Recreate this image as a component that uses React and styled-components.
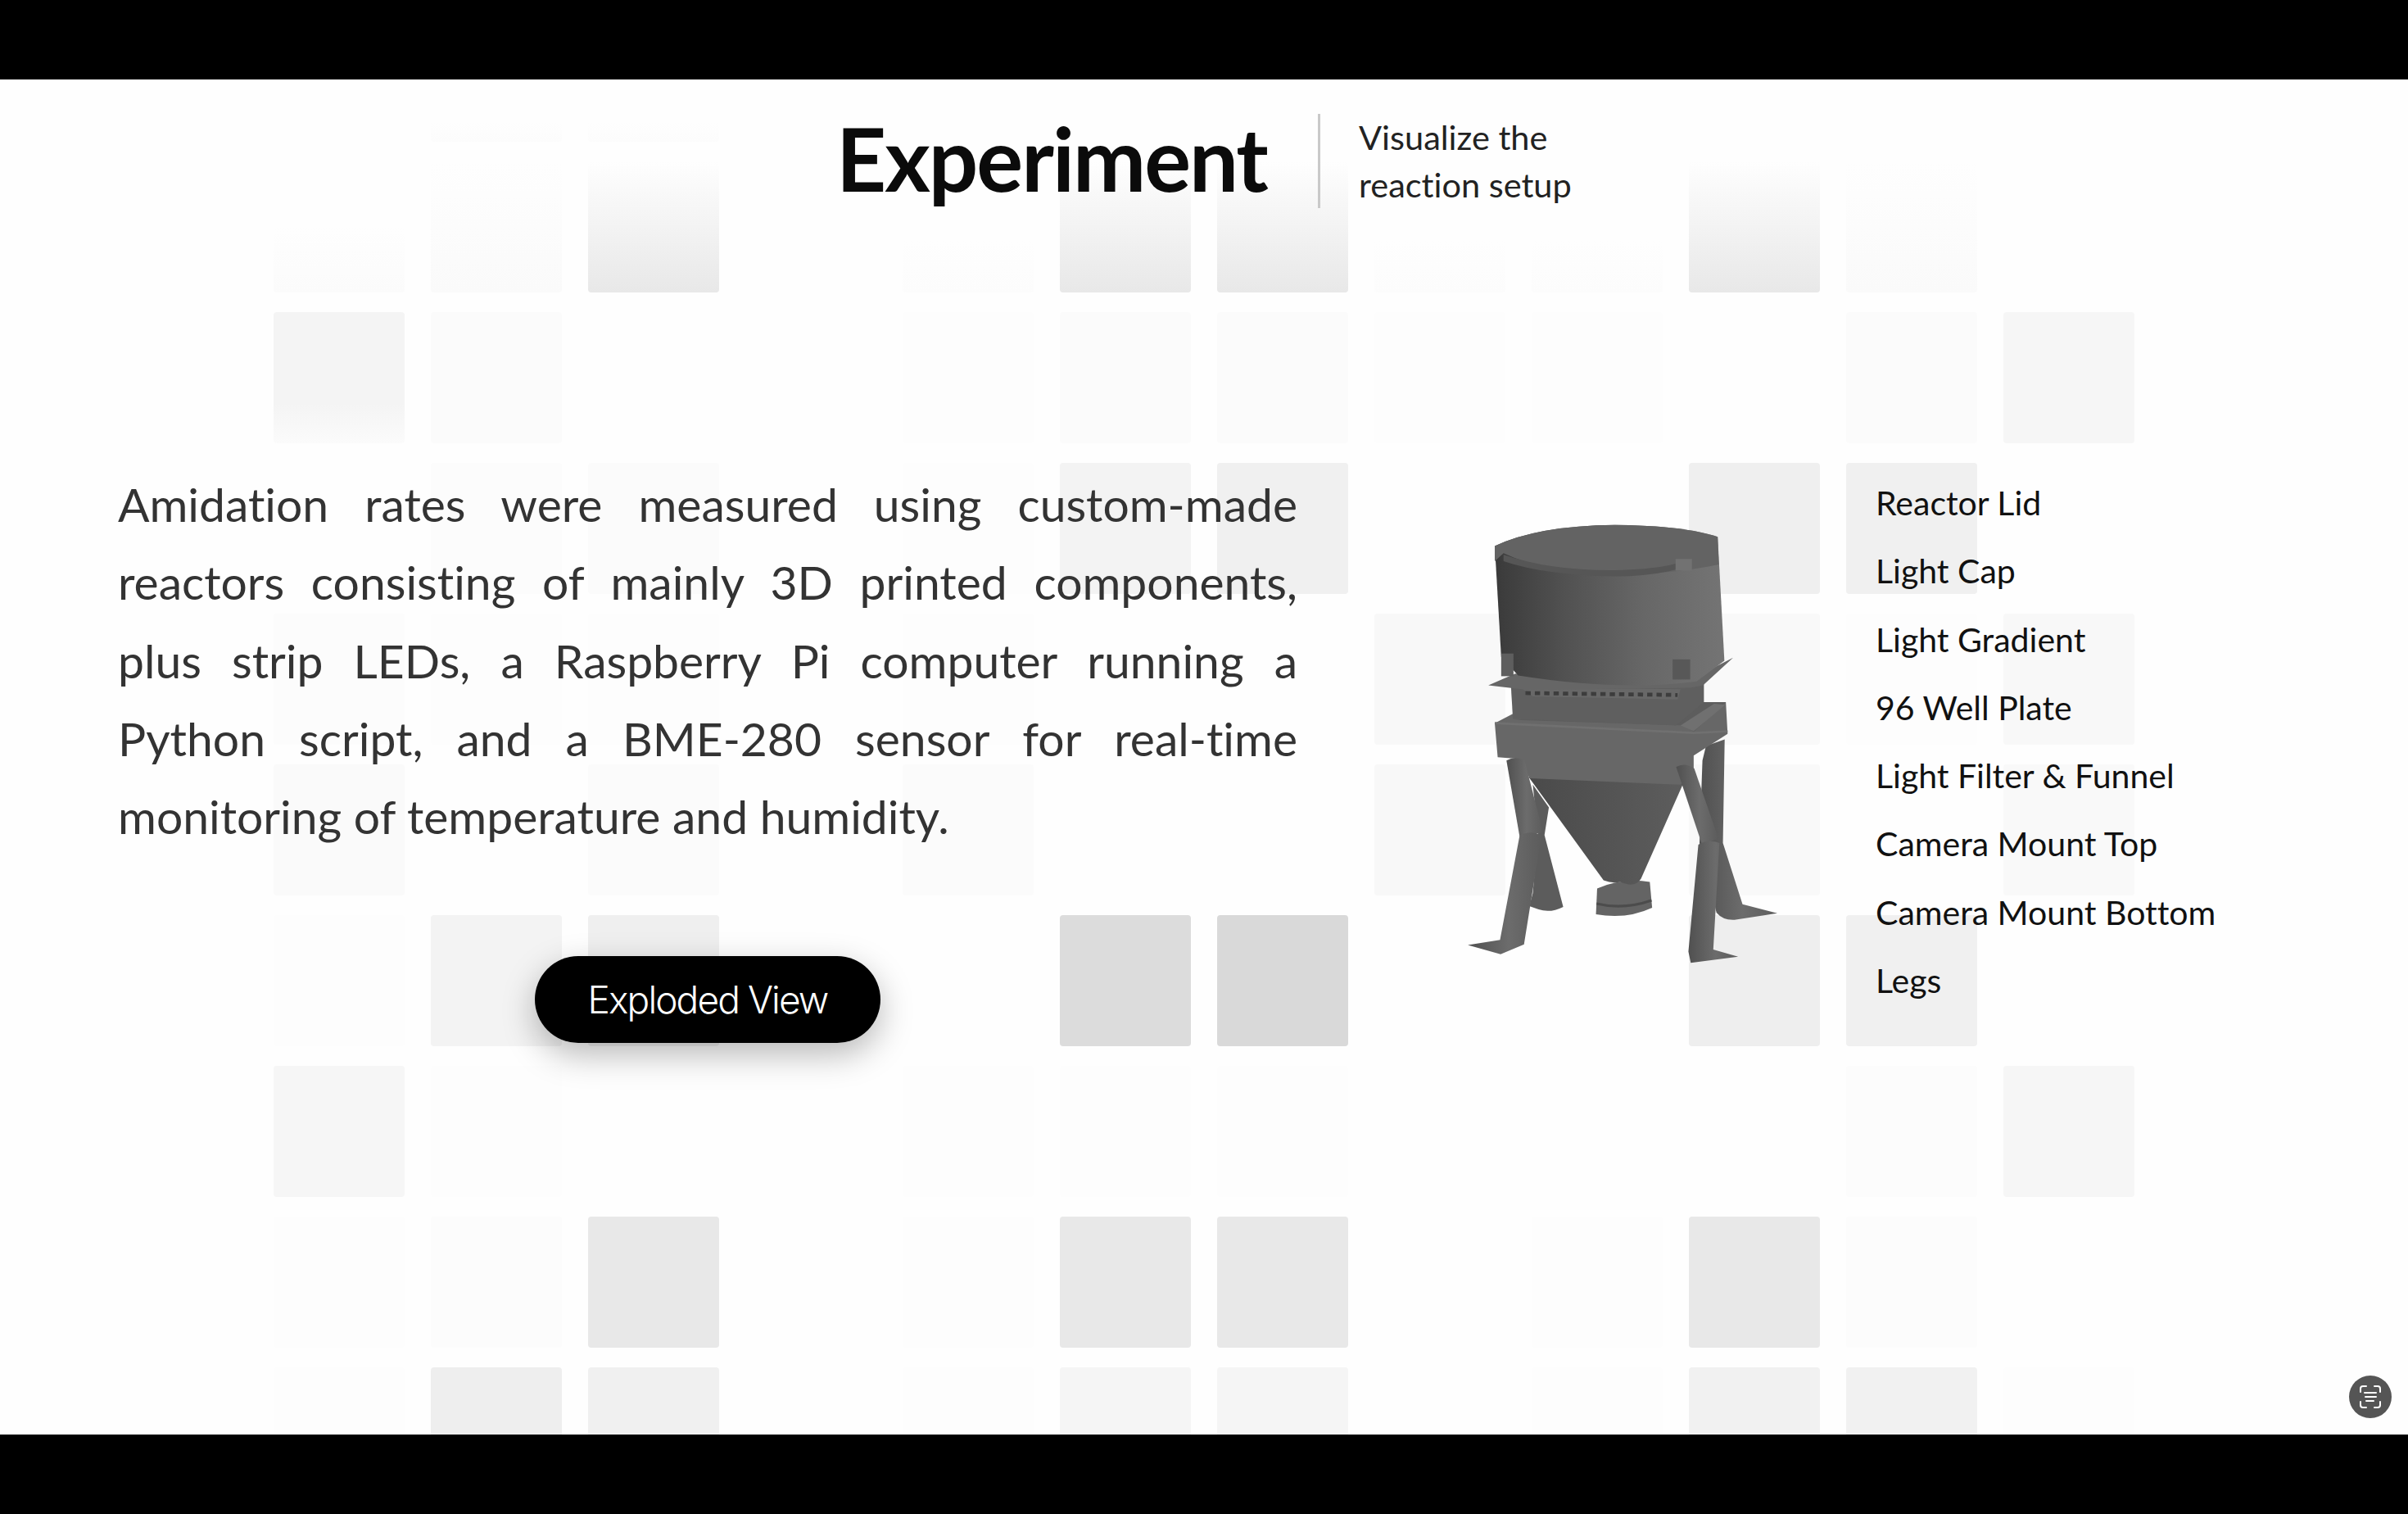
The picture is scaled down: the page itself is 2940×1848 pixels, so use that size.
import React from 'react';
import styled, { createGlobalStyle } from 'styled-components';

const Global = createGlobalStyle`
  html, body { margin: 0; padding: 0; background: #000; }
  #root { width: 2940px; height: 1848px; }
`;

const Stage = styled.div`
  position: relative;
  width: 2940px;
  height: 1848px;
  display: flex;
  flex-direction: column;
  background: #000;
  overflow: hidden;
`;
const Bar = styled.div`
  flex: 0 0 ${p => p.$h}px;
  background: #000;
`;
const Slide = styled.main`
  position: relative;
  flex: 1;
  background: #fefefe;
  overflow: hidden;
  display: flex;
  flex-direction: column;
  padding: 42px 0 0 144px;
  box-sizing: border-box;
`;
const Backdrop = styled.div`
  position: absolute;
  left: 334px;
  top: -84px;
  display: grid;
  grid-template-columns: repeat(12, 160px);
  grid-auto-rows: 160px;
  column-gap: 32px;
  row-gap: 24px;
`;
const Tile = styled.div`
  border-radius: 4px;
  background: ${p => (p.$fade
    ? `linear-gradient(180deg, #fefefe ${p.$from || 0}%, ${p.$tone} 100%)`
    : p.$rise
      ? `linear-gradient(180deg, ${p.$tone} 70%, #fbfbfb 100%)`
      : p.$tone)};
`;
const Header = styled.header`
  position: relative;
  display: flex;
  align-items: center;
  height: 115px;
  margin-left: 877px;
`;
const Title = styled.h1`
  margin: -6px 0 0;
  width: 588px;
  font-family: Lato, "Open Sans", sans-serif;
  font-weight: 700;
  font-size: 106.5px;
  line-height: 115px;
  letter-spacing: -2px;
  color: #0b0b0b;
`;
const Divider = styled.div`
  width: 3px;
  height: 115px;
  background: #c9c9c9;
`;
const Subtitle = styled.p`
  margin: -2px 0 0 47px;
  font-family: Lato, "Open Sans", sans-serif;
  font-size: 41.5px;
  line-height: 58px;
  font-variant-ligatures: none;
  color: #222;
`;
const Content = styled.section`
  position: relative;
  display: flex;
  align-items: flex-start;
  margin-top: 314px;
`;
const Column = styled.div`
  width: 1440px;
  display: flex;
  flex-direction: column;
  align-items: center;
`;
const Paragraph = styled.p`
  margin: 0;
  width: 100%;
  font-family: Lato, "Open Sans", sans-serif;
  font-size: 57px;
  line-height: 95.25px;
  font-variant-ligatures: none;
  color: #333;
  text-align: justify;
`;
const Pill = styled.button`
  margin-top: 123px;
  width: 422px;
  height: 106px;
  border: 0;
  border-radius: 53px;
  background: #000;
  color: #fff;
  font-family: Inter, "Liberation Sans", sans-serif;
  font-weight: 300;
  font-size: 46px;
  letter-spacing: -1.9px;
  box-shadow: 0 14px 40px rgba(0, 0, 0, 0.28);
`;
const Model = styled.svg`
  flex: none;
  width: 560px;
  height: 620px;
  margin: 32px 0 0 116px;
  filter: blur(0.6px);
`;
const Parts = styled.ul`
  list-style: none;
  margin: 4px 0 0 30px;
  padding: 0;
`;
const Part = styled.li`
  font-family: Lato, "Open Sans", sans-serif;
  font-size: 41px;
  line-height: 83.3px;
  font-variant-ligatures: none;
  color: #111;
  white-space: nowrap;
`;
const ScanBadge = styled.div`
  position: absolute;
  left: 2868px;
  top: 1679px;
  width: 52px;
  height: 52px;
  border-radius: 50%;
  background: #555;
  display: flex;
  align-items: center;
  justify-content: center;
`;

const F = 'fade';
const rows = [
  ['#fefefe', [F, '#fcfcfc', 85], [F, '#fcfcfc', 85], '#fefefe', '#fefefe', '#fefefe', '#fefefe', '#fefefe', '#fefefe', '#fefefe', '#fefefe', '#fefefe'],
  [[F, '#fbfbfb', 50], [F, '#fafafa'], [F, '#e8e8e8'], '#fefefe', [F, '#fcfcfc', 60], [F, '#e8e8e8'], [F, '#e8e8e8'], [F, '#fcfcfc', 60], [F, '#fcfcfc', 60], [F, '#e8e8e8'], [F, '#fafafa'], '#fefefe'],
  [['rise', '#f4f4f4'], '#fbfbfb', '#fefefe', '#fefefe', '#fdfdfd', '#fbfbfb', '#fbfbfb', '#fdfdfd', '#fdfdfd', '#fefefe', '#fbfbfb', '#f6f6f6'],
  ['#fefefe', '#fcfcfc', '#fbfbfb', '#fefefe', '#fdfdfd', '#f3f3f3', '#f0f0f0', '#fefefe', '#fefefe', '#efefef', '#f0f0f0', '#fefefe'],
  ['#fcfcfc', '#fdfdfd', '#fdfdfd', '#fefefe', '#fdfdfd', '#fefefe', '#fefefe', '#f8f8f8', '#fdfdfd', '#f9f9f9', '#fdfdfd', '#f8f8f8'],
  ['#fafafa', '#fefefe', '#fbfbfb', '#fefefe', '#fbfbfb', '#fefefe', '#fefefe', '#f8f8f8', '#fefefe', '#f9f9f9', '#fefefe', '#f9f9f9'],
  ['#fdfdfd', '#f3f3f3', '#efefef', '#fefefe', '#fefefe', '#dcdcdc', '#d9d9d9', '#fefefe', '#fefefe', '#eeeeee', '#f0f0f0', '#fefefe'],
  ['#f6f6f6', '#fdfdfd', '#fefefe', '#fefefe', '#fdfdfd', '#fdfdfd', '#fdfdfd', '#fefefe', '#fefefe', '#fefefe', '#fcfcfc', '#f6f6f6'],
  ['#fdfdfd', '#fcfcfc', '#e8e8e8', '#fefefe', '#fdfdfd', '#e8e8e8', '#e8e8e8', '#fefefe', '#fdfdfd', '#e8e8e8', '#fcfcfc', '#fefefe'],
  ['#fdfdfd', '#eeeeee', '#f0f0f0', '#fefefe', '#fdfdfd', '#f5f5f5', '#f5f5f5', '#fefefe', '#fdfdfd', '#f1f1f1', '#f1f1f1', '#fdfdfd'],
];

const parts = ['Reactor Lid', 'Light Cap', 'Light Gradient', '96 Well Plate', 'Light Filter & Funnel', 'Camera Mount Top', 'Camera Mount Bottom', 'Legs'];

const Reactor = () => (
  <Model viewBox="0 0 1568 1568" preserveAspectRatio="none">
    <defs>
      <linearGradient id="drum" x1="0" x2="1" y1="0" y2="0">
        <stop offset="0" stopColor="#3a3a3a" />
        <stop offset="0.3" stopColor="#515151" />
        <stop offset="0.65" stopColor="#676767" />
        <stop offset="1" stopColor="#747474" />
      </linearGradient>
      <linearGradient id="tube" x1="0" x2="1" y1="0" y2="0">
        <stop offset="0" stopColor="#505050" />
        <stop offset="0.55" stopColor="#6c6c6c" />
        <stop offset="1" stopColor="#5c5c5c" />
      </linearGradient>
      <linearGradient id="cone" x1="0" x2="1" y1="0" y2="0">
        <stop offset="0" stopColor="#4a4a4a" />
        <stop offset="1" stopColor="#5d5d5d" />
      </linearGradient>
    </defs>
    <path d="M480 905 L535 975 L520 1060 L584 1282 Q540 1302 500 1290 L468 1280 L480 1240 L498 1060 Z" fill="#5c5c5c" />
    <path d="M1060 830 L1072 785 L1136 765 L1130 1085 L1197 1274 L1316 1302 L1170 1322 Q1130 1324 1108 1300 L1050 1085 Z" fill="url(#tube)" />
    <path d="M700 1225 Q790 1190 880 1205 L888 1285 Q800 1322 696 1305 Z" fill="#646464" />
    <path d="M698 1272 Q790 1292 886 1262" fill="none" stroke="#4c4c4c" strokeWidth="8" />
    <path d="M465 880 L995 900 L850 1195 Q830 1225 780 1205 Q750 1210 722 1200 Z" fill="url(#cone)" />
    <path d="M350 715 L420 682 L1140 650 L1146 748 L1030 815 L1030 860 L985 905 L470 885 L430 825 L360 820 Z" fill="#676767" />
    <path d="M420 705 L1000 722 L1030 742 L1140 650 L1000 650 Z" fill="#5d5d5d" />
    <path d="M985 722 L1030 740 L1138 658 L1100 655 Z" fill="#707070" />
    <path d="M350 715 L1030 745 L1146 740" fill="none" stroke="#707070" strokeWidth="7" />
    <path d="M405 595 L1065 585 L1065 650 L970 722 L412 702 Z" fill="#5f5f5f" />
    <path d="M440 606 L985 610 L975 642 L480 632 Z" fill="#686868" />
    <path d="M455 622 L975 628" fill="none" stroke="#3d3d3d" strokeWidth="12" strokeDasharray="18 14" />
    <path d="M328 598 L420 562 L1020 580 L1165 513 L1062 598 L1020 606 L460 612 Z" fill="#666666" />
    <path d="M350 168 Q500 105 760 103 Q1000 105 1112 140 L1135 522 L1040 586 Q780 618 430 568 L372 510 Z" fill="url(#drum)" />
    <path d="M350 168 Q500 105 760 103 Q1000 105 1112 140 L1116 225 Q960 255 760 255 Q520 250 380 190 L350 215 Z" fill="#636363" />
    <path d="M380 195 Q540 245 760 243 Q900 240 970 222 L970 240 Q880 262 760 262 Q520 258 380 215 Z" fill="#565656" />
    <rect x="968" y="208" width="56" height="36" fill="#727272" />
    <rect x="958" y="518" width="60" height="62" fill="#585858" />
    <rect x="372" y="500" width="42" height="70" fill="#5e5e5e" />
    <path d="M390 830 Q420 815 452 830 L515 1052 L435 1065 Z" fill="url(#tube)" />
    <path d="M435 1062 Q470 1045 510 1060 L450 1398 L370 1428 L258 1400 L368 1384 Z" fill="url(#tube)" />
    <path d="M970 850 Q1000 835 1032 855 L1115 1072 L1058 1088 Z" fill="url(#tube)" />
    <path d="M1046 1090 Q1080 1072 1118 1085 L1097 1414 L1182 1436 L1020 1455 L1012 1420 Z" fill="url(#tube)" />
  </Model>
);

export default function App() {
  return (
    <Stage>
      <Global />
      <Bar $h={97} />
      <Slide>
        <Backdrop>
          {rows.flatMap((row, r) => row.map((t, c) => (
            Array.isArray(t)
              ? <Tile key={`${r}-${c}`} $fade={t[0] === F} $rise={t[0] === 'rise'} $tone={t[1]} $from={t[2]} />
              : <Tile key={`${r}-${c}`} $tone={t} />
          )))}
        </Backdrop>
        <Header>
          <Title>Experiment</Title>
          <Divider />
          <Subtitle>Visualize the<br />reaction setup</Subtitle>
        </Header>
        <Content>
          <Column>
            <Paragraph>
              Amidation rates were measured using custom-made reactors consisting of mainly 3D printed components, plus strip LEDs, a Raspberry Pi computer running a Python script, and a BME-280 sensor for real-time monitoring of temperature and humidity.
            </Paragraph>
            <Pill>Exploded View</Pill>
          </Column>
          <Reactor />
          <Parts>
            {parts.map(p => <Part key={p}>{p}</Part>)}
          </Parts>
        </Content>
      </Slide>
      <Bar $h={97} />
      <ScanBadge>
        <svg width="30" height="30" viewBox="0 0 30 30" fill="none" stroke="#fff" strokeWidth="2" strokeLinecap="round">
          <path d="M3 9V5a3 3 0 0 1 3-3h4M20 2h4a3 3 0 0 1 3 3v4M27 21v4a3 3 0 0 1-3 3h-4M10 28H6a3 3 0 0 1-3-3v-4" />
          <path d="M8 10h14M9 15h13M10 20h9" />
        </svg>
      </ScanBadge>
    </Stage>
  );
}
